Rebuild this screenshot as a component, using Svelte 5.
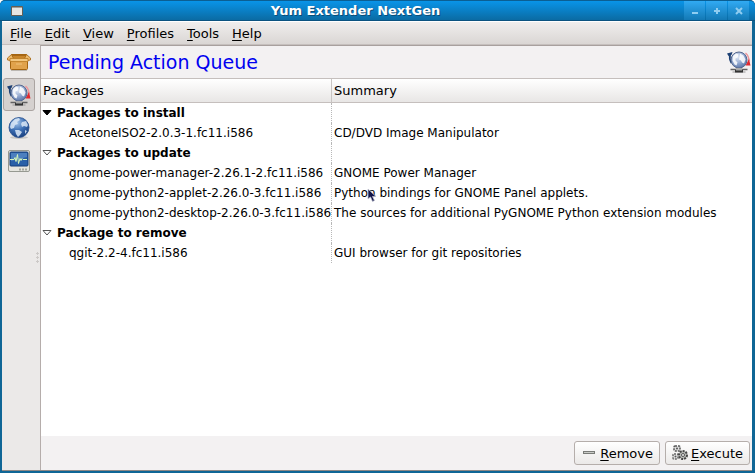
<script>
  const menus = ['File', 'Edit', 'View', 'Profiles', 'Tools', 'Help'];
  const groups = [
    {
      title: 'Packages to install',
      active: true,
      items: [['AcetoneISO2-2.0.3-1.fc11.i586', 'CD/DVD Image Manipulator']]
    },
    {
      title: 'Packages to update',
      items: [
        ['gnome-power-manager-2.26.1-2.fc11.i586', 'GNOME Power Manager'],
        ['gnome-python2-applet-2.26.0-3.fc11.i586', 'Python bindings for GNOME Panel applets.'],
        ['gnome-python2-desktop-2.26.0-3.fc11.i586', 'The sources for additional PyGNOME Python extension modules']
      ]
    },
    {
      title: 'Package to remove',
      items: [['qgit-2.2-4.fc11.i586', 'GUI browser for git repositories']]
    }
  ];
  let open = $state([true, true, true]);
  let view = $state('queue');
</script>

{#snippet queueIcon()}
  <svg width="24" height="24" viewBox="0 0 24 24" aria-hidden="true">
    <path d="M3 4q-1 5 1.500 9" fill="none" stroke="#1c3f73" stroke-width="1.800" />
    <path d="M0 3.500L5.500 2 4.500 5 1.500 6z" fill="#1c3f73" />
    <path d="M18.500 3q3.500 3 3.500 8" fill="none" stroke="#ee9599" stroke-width="1.500" />
    <path d="M18.500 15.500l3.500-6.500 1.500 6.500z" fill="#e02a31" />
    <circle cx="12" cy="10" r="8" fill="url(#pale)" stroke="#56698f" />
    <path d="M6 6l3-2.500 2.500 1-1 3-2 1v2l2 2-1 3-2-1-2-4zM13 3.500l3.500 2 2 4-1.500 4-2-1-1-2-2-1z" fill="#fff" opacity=".85" />
    <path d="M3.500 19.500h17" stroke="#626262" stroke-width="1.500" /><path d="M5.500 22h13" stroke="#999" />
    <path d="M8 20h8v2.500H8z" fill="#333" /><path d="M9 18h6v2.500H9z" fill="#aaa" />
  </svg>
{/snippet}

<svg class="defs" width="0" height="0" aria-hidden="true">
  <defs>
    <radialGradient id="pale" cx=".4" cy=".3" r=".8">
      <stop offset="0" stop-color="#e3ebf8" /><stop offset=".55" stop-color="#8ba2cc" /><stop offset="1" stop-color="#4f6a9e" />
    </radialGradient>
    <radialGradient id="blue" cx=".4" cy=".25" r=".8">
      <stop offset="0" stop-color="#a5c5ea" /><stop offset=".5" stop-color="#3d70b5" /><stop offset="1" stop-color="#153b7b" />
    </radialGradient>
  </defs>
</svg>

<div class="window">
  <header class="titlebar">
    <svg class="appicon" width="12" height="10" viewBox="0 0 12 10" aria-hidden="true">
      <path d="M.5.5h11v9H.5z" fill="#e6e6e3" stroke="#655f55" /><path d="M1 1.500h10" stroke="#a39e96" />
    </svg>
    <h1>Yum Extender NextGen</h1>
    <div class="controls">
      <button aria-label="Minimize"><svg width="10" height="10" viewBox="0 0 10 10"><path d="M2 7h6" stroke="#8fcdf1" stroke-width="2" /></svg></button>
      <button aria-label="Maximize"><svg width="10" height="10" viewBox="0 0 10 10"><path d="M2 5h6M5 2v6" stroke="#8fcdf1" stroke-width="2" /></svg></button>
      <button aria-label="Close"><svg width="10" height="10" viewBox="0 0 10 10"><path d="M2 2l6 6M8 2L2 8" stroke="#8fcdf1" stroke-width="2" /></svg></button>
    </div>
  </header>
  <nav class="menubar">
    {#each menus as m}
      <button><u>{m[0]}</u>{m.slice(1)}</button>
    {/each}
  </nav>
  <div class="body">
    <aside>
      <button class:on={view === 'packages'} aria-label="Packages" onclick={() => (view = 'packages')}>
        <svg width="24" height="24" viewBox="0 0 24 24" aria-hidden="true">
          <path d="M3.500 9.500h17v9q0 1-1 1h-15q-1 0-1-1z" fill="#e0a24b" stroke="#a4640f" />
          <path d="M4.500 4.500h15l1 5h-17z" fill="#a76716" stroke="#a4640f" />
          <path d="M6 6h12l1 3H5z" fill="#c98529" />
          <path d="M4.500 4.500L.5 8v2l3 .5 3-2zM19.500 4.500L23.500 8v2l-3 .5-3-2z" fill="#edba6b" stroke="#a4640f" stroke-width=".8" />
          <path d="M3 8.500h18v3H3z" fill="#f3c77f" stroke="#b97a22" stroke-width=".8" />
          <path d="M9 14h6" stroke="#efc27c" /><path d="M4 20.500h16" stroke="#bbb7b2" />
        </svg>
      </button>
      <button class:on={view === 'queue'} aria-label="Pending queue" onclick={() => (view = 'queue')}>{@render queueIcon()}</button>
      <button class:on={view === 'repos'} aria-label="Repositories" onclick={() => (view = 'repos')}>
        <svg width="24" height="24" viewBox="0 0 24 24" aria-hidden="true">
          <ellipse cx="12" cy="21.500" rx="9" ry="1.500" fill="#c9c7c5" />
          <circle cx="12" cy="11.500" r="10" fill="url(#blue)" stroke="#234d8c" stroke-width=".8" />
          <path d="M4 7l4-4 4-1 1 2-3 2 1 2-3 1-1 3-3 1-1-2zM15 6l4-1 2 4-1 2-3-1-2 1-1-3zM8 14l4 0 3 2-2 3-2 2-2-3zM18 14l2 1-2 3z" fill="#dce9f7" opacity=".85" />
        </svg>
      </button>
      <button class:on={view === 'output'} aria-label="Output" onclick={() => (view = 'output')}>
        <svg width="24" height="24" viewBox="0 0 24 24" aria-hidden="true">
          <rect x="1.500" y="1.500" width="21" height="21" rx="1.500" fill="#e5e5df" stroke="#969991" />
          <rect x="3" y="3" width="18" height="14" rx="1" fill="#2960a8" stroke="#153c78" />
          <path d="M4 4h16v4L4 12z" fill="#4c80bf" />
          <path d="M3 10.500h4l1-2 1 4 1.500-7 1 9 1.500-5 1 2 1-2 1 1h4" fill="none" stroke="#d6f7ba" />
          <path d="M12 20.500h9" stroke="#a6a79f" stroke-width="2" stroke-dasharray="2 1" />
        </svg>
      </button>
      <svg class="grip" width="3" height="11" viewBox="0 0 3 11" aria-hidden="true"><path d="M0 1.500h3M0 5.500h3M0 9.500h3M1.500 0v3M1.500 4v3M1.500 8v3" stroke="#ccc9c7" /></svg>
    </aside>
    <main>
      <div class="heading"><h2>Pending Action Queue</h2>{@render queueIcon()}</div>
      <div class="list">
        <table>
          <thead><tr><th>Packages</th><th>Summary</th></tr></thead>
          <tbody>
            {#each groups as g, i}
              <tr class="group">
                <td>
                  <button onclick={() => (open[i] = !open[i])} aria-expanded={open[i]}>
                    <svg width="10" height="6" viewBox="0 0 10 6" aria-hidden="true"><path d="M1 .5h8L5 5z" fill={g.active ? '#000' : '#fff'} stroke={g.active ? '#000' : '#555'} /></svg>{g.title}
                  </button>
                </td><td></td>
              </tr>
              {#if open[i]}
                {#each g.items as [name, summary]}
                  <tr><td class="name">{name}</td><td>{summary}</td></tr>
                {/each}
              {/if}
            {/each}
          </tbody>
        </table>
      </div>
      <footer>
        <button>
          <svg width="16" height="16" viewBox="0 0 16 16" aria-hidden="true"><rect x="2.500" y="6.500" width="11" height="2" fill="#c9cbc7" stroke="#797b77" /></svg><span><u>R</u>emove</span>
        </button>
        <button>
          <svg width="16" height="16" viewBox="0 0 16 16" aria-hidden="true">
            <rect x="2" y="1" width="6" height="5" rx="1" fill="#ddd" stroke="#555" stroke-width="1.500" stroke-dasharray="2 1" /><circle cx="5" cy="3.500" r="1" fill="#555" />
            <rect x="1" y="9" width="5" height="5" rx="1" fill="#e5e5e5" stroke="#666" stroke-width="1.500" stroke-dasharray="2 1" /><circle cx="3.500" cy="11.500" r="1" fill="#555" />
            <circle cx="11" cy="10" r="4" fill="#b9bbb7" stroke="#444" stroke-width="2" stroke-dasharray="2 1" /><circle cx="11" cy="10" r="1.500" fill="#f5f5f5" stroke="#555" />
          </svg><span><u>E</u>xecute</span>
        </button>
      </footer>
    </main>
  </div>
  <svg class="pointer" width="10" height="15" viewBox="0 0 10 15" aria-hidden="true"><path d="M1 1v10l2.500-2 2 4.500 2-1-2-4h3.500z" fill="#10154a" stroke="#c4c5d2" stroke-width=".8" /></svg>
</div>

<style>
  :global(body) { background: #fff; }
  .defs { position: absolute; }
  .window {
    position: relative; box-sizing: border-box; min-height: 100vh; display: flex; flex-direction: column;
    font-family: "DejaVu Sans", sans-serif; font-size: 13px; color: #000;
    background: #0f6696; border-radius: 5px 5px 0 0; padding: 0 3px 2px 2px; overflow: hidden;
  }
  button { font: inherit; color: inherit; border: 0; padding: 0; margin: 0; background: none; }
  svg { display: block; flex: none; }
  h1, h2 { margin: 0; }
  .titlebar {
    display: flex; align-items: center; height: 21px; box-sizing: border-box; margin: 0 -3px 0 -2px; padding: 0 6px 0 11px;
    border-top: 1px solid #0b5f93; border-bottom: 1px solid #0b5380; border-radius: 5px 5px 0 0;
    background: linear-gradient(#0994e8, #0b6ba3);
  }
  h1 { flex: 1; text-align: center; font-size: 13px; line-height: 19px; color: #fff; text-shadow: 1px 1px 0 #0a4d78; padding-left: 4px; }
  .controls { display: flex; gap: 1px; }
  .controls button { width: 21px; height: 19px; display: grid; place-items: center; background: linear-gradient(#31aaf3, #1379b5); }
  .menubar {
    display: flex; gap: 13px; height: 24px; box-sizing: border-box; padding: 0 8px;
    background: linear-gradient(#f0eeed, #dad6d4); border-top: 1px solid #fff; border-bottom: 1px solid #c5bfbd;
  }
  u { text-underline-offset: 2px; text-decoration-thickness: 1px; }
  .body { flex: 1; display: flex; background: #ebe9e8; border-bottom: 1px solid #8f8886; }
  aside { width: 38px; box-sizing: border-box; padding-left: 1px; position: relative; }
  aside button { width: 32px; height: 33px; box-sizing: border-box; display: grid; place-items: center; border: 1px solid transparent; border-radius: 3px; }
  aside button.on { background: #d5d1cf; border-color: #aaa4a1; }
  .grip { position: absolute; right: 1px; top: calc(50% - 6px); }
  main { flex: 1; min-width: 0; display: flex; flex-direction: column; border-left: 1px solid #b5adab; border-top: 1px solid #a8a09e; background: #f3f1f2; }
  .heading { display: flex; align-items: center; justify-content: space-between; height: 32px; padding: 0 1px 0 7px; border-bottom: 1px solid #c5bfbd; }
  h2 { font-size: 19px; font-weight: 400; color: #0000f0; }
  .list { flex: 1; background: #fff; }
  table { width: 100%; border-collapse: separate; border-spacing: 0; table-layout: fixed; font-size: 12px; }
  th { height: 23px; padding: 0 2px; text-align: left; font-size: 13px; font-weight: 400; background: linear-gradient(#fff, #e8e6e5); border-bottom: 1px solid #c5bfbd; }
  th:first-child { width: 286px; border-right: 1px solid #c9c5c3; }
  td { height: 20px; padding: 0 2px; white-space: nowrap; }
  td:first-child { border-right: 1px dotted #b8b8b8; }
  td.name { padding: 0 0 0 28px; }
  .group td { padding-left: 1px; }
  .group button { display: flex; align-items: center; gap: 5px; font-weight: 700; }
  footer { display: flex; justify-content: flex-end; gap: 5px; padding: 5px 2px 5px 0; }
  footer button {
    display: flex; align-items: center; gap: 3px; height: 24px; padding: 0 6px; box-sizing: border-box;
    border: 1px solid #b5aeab; border-radius: 3px; background: linear-gradient(#fff, #ebe9e8);
  }
  .pointer { position: absolute; left: 367px; top: 188px; }
</style>
